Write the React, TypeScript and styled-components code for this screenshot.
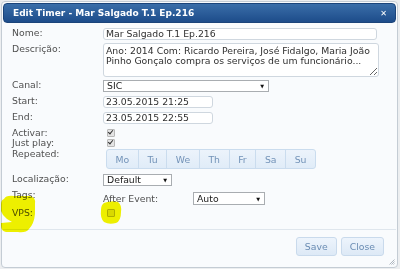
import React from 'react';
import styled, { createGlobalStyle, css } from 'styled-components';

const GlobalStyle = createGlobalStyle`
  html, body {
    margin: 0;
    padding: 0;
    background: #eceef0;
  }
  body {
    font-family: "DejaVu Sans", Verdana, sans-serif;
    font-size: 9.3px;
  }
`;

const DAYS = ['Mo', 'Tu', 'We', 'Th', 'Fr', 'Sa', 'Su'];

export default function App() {
  return (
    <Page>
      <GlobalStyle />
      <Dialog>
        <TitleBar>
          <Title>Edit Timer - Mar Salgado T.1 Ep.216</Title>
          <CloseX>✕</CloseX>
        </TitleBar>

        <Content>
          <Row>
            <Label $pad={0}>Nome:</Label>
            <TextInput $width={274}>Mar Salgado T.1 Ep.216</TextInput>
          </Row>
          <Row $mt={3}>
            <Label $pad={1}>Descrição:</Label>
            <TextArea
              readOnly
              value={'Ano: 2014 Com: Ricardo Pereira, José Fidalgo, Maria João\nPinho Gonçalo compra os serviços de um funcionário...'}
            />
          </Row>
          <Row $mt={3}>
            <Label $pad={0}>Canal:</Label>
            <Select $width={166}>
              <span>SIC</span>
              <Arrow>▼</Arrow>
            </Select>
          </Row>
          <Row $mt={4}>
            <Label $pad={0}>Start:</Label>
            <TextInput $width={110}>23.05.2015 21:25</TextInput>
          </Row>
          <Row $mt={4}>
            <Label $pad={0}>End:</Label>
            <TextInput $width={110}>23.05.2015 22:55</TextInput>
          </Row>
          <Row $mt={4}>
            <Label $pad={0}>Activar:</Label>
            <CheckCell>
              <Check $checked />
            </CheckCell>
          </Row>
          <Row $mt={0}>
            <Label $pad={0}>Just play:</Label>
            <CheckCell>
              <Check $checked />
            </CheckCell>
          </Row>
          <Row $mt={1}>
            <Label $pad={0}>Repeated:</Label>
            <DayGroup>
              {DAYS.map((d) => (
                <DayButton key={d}>{d}</DayButton>
              ))}
            </DayGroup>
          </Row>
          <Row $mt={5}>
            <Label $pad={0}>Localização:</Label>
            <Select $width={69}>
              <span>Default</span>
              <Arrow>▼</Arrow>
            </Select>
          </Row>
          <Row $mt={4}>
            <Label $pad={0}>Tags:</Label>
            <TagsLine>
              <SubLabel>After Event:</SubLabel>
              <Select $width={72} $tall>
                <span>Auto</span>
                <Arrow>▼</Arrow>
              </Select>
            </TagsLine>
          </Row>
          <Row $mt={3}>
            <Label $pad={0}>VPS:</Label>
            <CheckCell>
              <Check />
            </CheckCell>
          </Row>
        </Content>

        <Footer>
          <Button>Save</Button>
          <Button>Close</Button>
          <Grip viewBox="0 0 6 6">
            <path d="M5.5 0.5 L0.5 5.5 M5.5 2.5 L2.5 5.5 M5.5 4.5 L4.5 5.5" stroke="#9aa4ae" strokeWidth="0.8" />
          </Grip>
        </Footer>
      </Dialog>

      <Marker viewBox="0 0 400 269">
        <path
          d="M4 199 Q6 195 14 196 L30 196 Q36 197 35 204 L35 214 Q34 224 29 229 Q26 233 18 232 L6 232 Q1 231 1 226 L1 223 L12 222 Q6 219 3 215 L1 211 L1 204 Q1 200 4 199 Z"
          fill="#f3f300"
        />
        <path
          d="M104 203 Q111 200 118 202 Q122 205 121 212 Q121 221 116 223 Q109 225 104 222 Q100 218 101 210 Q101 205 104 203 Z"
          fill="#f3f300"
        />
      </Marker>
    </Page>
  );
}

const Page = styled.div`
  position: relative;
  width: 400px;
  height: 269px;
  padding: 1px 2px 0 1px;
  box-sizing: border-box;
  overflow: hidden;
`;

const Dialog = styled.section`
  display: flex;
  flex-direction: column;
  box-sizing: border-box;
  width: 397px;
  height: 267px;
  padding: 1px;

  background: #f9fbfd;
  border: 1px solid #c4ccd4;
  border-radius: 4px;
`;

const TitleBar = styled.header`
  display: flex;
  align-items: center;
  justify-content: space-between;
  box-sizing: border-box;
  height: 20px;
  padding: 0 8px 0 9px;

  background: linear-gradient(#3a6ea9, #1d4c8a);
  border: 1px solid #1b447a;
  border-radius: 4px;
`;

const Title = styled.span`
  color: #ffffff;
  font-weight: 700;
  font-size: 9px;
`;

const CloseX = styled.span`
  color: #ffffff;
  font-weight: 700;
  font-size: 8px;
`;

const Content = styled.div`
  flex: 1;
  display: flex;
  flex-direction: column;
  padding: 5px 0 0 9px;
`;

const Row = styled.div<{ $mt?: number }>`
  display: grid;
  grid-template-columns: 91px 1fr;
  align-items: start;
  margin-top: ${({ $mt }) => $mt ?? 0}px;
`;

const Label = styled.span<{ $pad: number }>`
  padding-top: ${({ $pad }) => $pad}px;
  color: #505050;
  line-height: 10px;
  white-space: nowrap;
`;

const fieldBox = css`
  box-sizing: border-box;
  height: 12px;
  background: #ffffff;
  color: #303030;
  line-height: 10px;
`;

const TextInput = styled.div<{ $width: number }>`
  ${fieldBox};
  width: ${({ $width }) => $width}px;
  padding: 0 2px;
  border: 1px solid #cfd7df;
  border-radius: 3px;
  white-space: nowrap;
`;

const TextArea = styled.textarea`
  box-sizing: border-box;
  width: 276px;
  height: 34px;
  margin: 0;
  padding: 2px 2px;
  display: block;

  font-family: "DejaVu Sans", Verdana, sans-serif;
  font-size: 9.3px;
  line-height: 10px;
  color: #303030;

  background: #ffffff;
  border: 1px solid #cfd7df;
  border-radius: 3px;
  overflow: hidden;
  outline: none;
`;

const Select = styled.div<{ $width: number; $tall?: boolean }>`
  ${fieldBox};
  height: ${({ $tall }) => ($tall ? 13 : 12)}px;
  display: flex;
  align-items: center;
  justify-content: space-between;
  width: ${({ $width }) => $width}px;
  padding: 0 4px 0 3px;
  border: 1px solid #a9adb1;
  color: #202020;
`;

const Arrow = styled.span`
  font-size: 5px;
  color: #111111;
`;

const CheckCell = styled.div`
  display: flex;
  align-items: flex-start;
  height: 10px;
  padding: 1px 0 0 4px;
  box-sizing: border-box;
`;

const Check = styled.span<{ $checked?: boolean }>`
  position: relative;
  display: inline-block;
  width: 6px;
  height: 6px;
  background: #e4e4e4;
  border: 1px solid #b8b8b8;
  border-radius: 1px;

  ${({ $checked }) =>
    $checked &&
    css`
      &::after {
        content: '';
        position: absolute;
        left: 1px;
        top: -1px;
        width: 2px;
        height: 4px;
        border: solid #333333;
        border-width: 0 1.3px 1.3px 0;
        transform: rotate(40deg);
      }
    `}
`;

const DayGroup = styled.div`
  display: flex;
  padding-left: 3px;
`;

const DayButton = styled.span`
  display: flex;
  align-items: center;
  justify-content: center;
  height: 20px;
  box-sizing: border-box;
  padding: 0 8.6px;
  margin-right: -1px;

  color: #7393b8;
  background: linear-gradient(#ecf3fb, #e0ecf8);
  border: 1px solid #cadcee;

  &:first-child {
    border-radius: 3px 0 0 3px;
  }
  &:last-child {
    border-radius: 0 3px 3px 0;
  }
`;

const TagsLine = styled.div`
  display: flex;
  align-items: center;
  padding-top: 2px;
`;

const SubLabel = styled.span`
  width: 90px;
  color: #505050;
`;

const Footer = styled.footer`
  position: relative;
  display: flex;
  justify-content: flex-end;
  gap: 4px;
  padding: 7px 12px 10px 0;
  border-top: 1px solid #dfe6ed;
`;

const Button = styled.span`
  display: flex;
  align-items: center;
  box-sizing: border-box;
  height: 19px;
  padding: 0 8px;

  color: #6a8cb3;
  background: linear-gradient(#edf4fc, #dde9f6);
  border: 1px solid #c9daec;
  border-radius: 3px;
`;

const Grip = styled.svg`
  position: absolute;
  right: 1px;
  bottom: 1px;
  width: 6px;
  height: 6px;
`;

const Marker = styled.svg`
  position: absolute;
  inset: 0;
  width: 400px;
  height: 269px;
  pointer-events: none;
  mix-blend-mode: multiply;
`;
